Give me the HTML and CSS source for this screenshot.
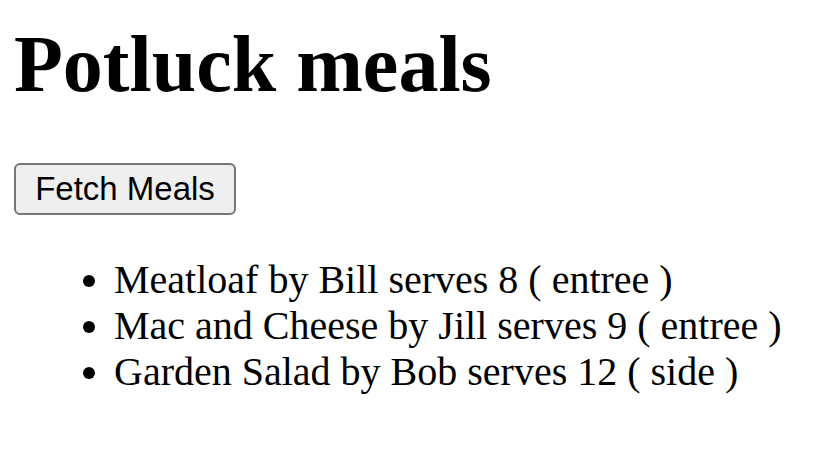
FILE: index.html
```html
<!DOCTYPE html>
<html>
<head>
<meta charset="utf-8">
<link rel="stylesheet" href="styles.css">
</head>
<body>
<div class="page">
  <h1 class="title">Potluck meals</h1>
  <button class="fetch">Fetch Meals</button>
  <ul class="meals">
    <li>Meatloaf by Bill serves 8 ( entree )</li>
    <li>Mac and Cheese by Jill serves 9 ( entree )</li>
    <li>Garden Salad by Bob serves 12 ( side )</li>
  </ul>
</div>
</body>
</html>
```
FILE: styles.css
```css
html, body {
  margin: 0;
  padding: 0;
  background: #ffffff;
}
.page {
  padding: 18px 14px 0 14px;
  font-family: "Liberation Serif", "Times New Roman", serif;
  color: #000;
}
.title {
  margin: 0 0 53px 0;
  font-size: 80px;
  font-weight: bold;
  line-height: 92px;
}
.fetch {
  display: block;
  margin: 0;
  box-sizing: border-box;
  height: 52px;
  width: 222px;
  padding: 0;
  font-family: "Liberation Sans", Arial, sans-serif;
  font-size: 33px;
  color: #000;
  background: #efefef;
  border: 2px solid #767676;
  border-radius: 6px;
}
.meals {
  margin: 42px 0 0 0;
  padding-left: 100px;
  font-size: 40px;
  line-height: 46px;
}
```
